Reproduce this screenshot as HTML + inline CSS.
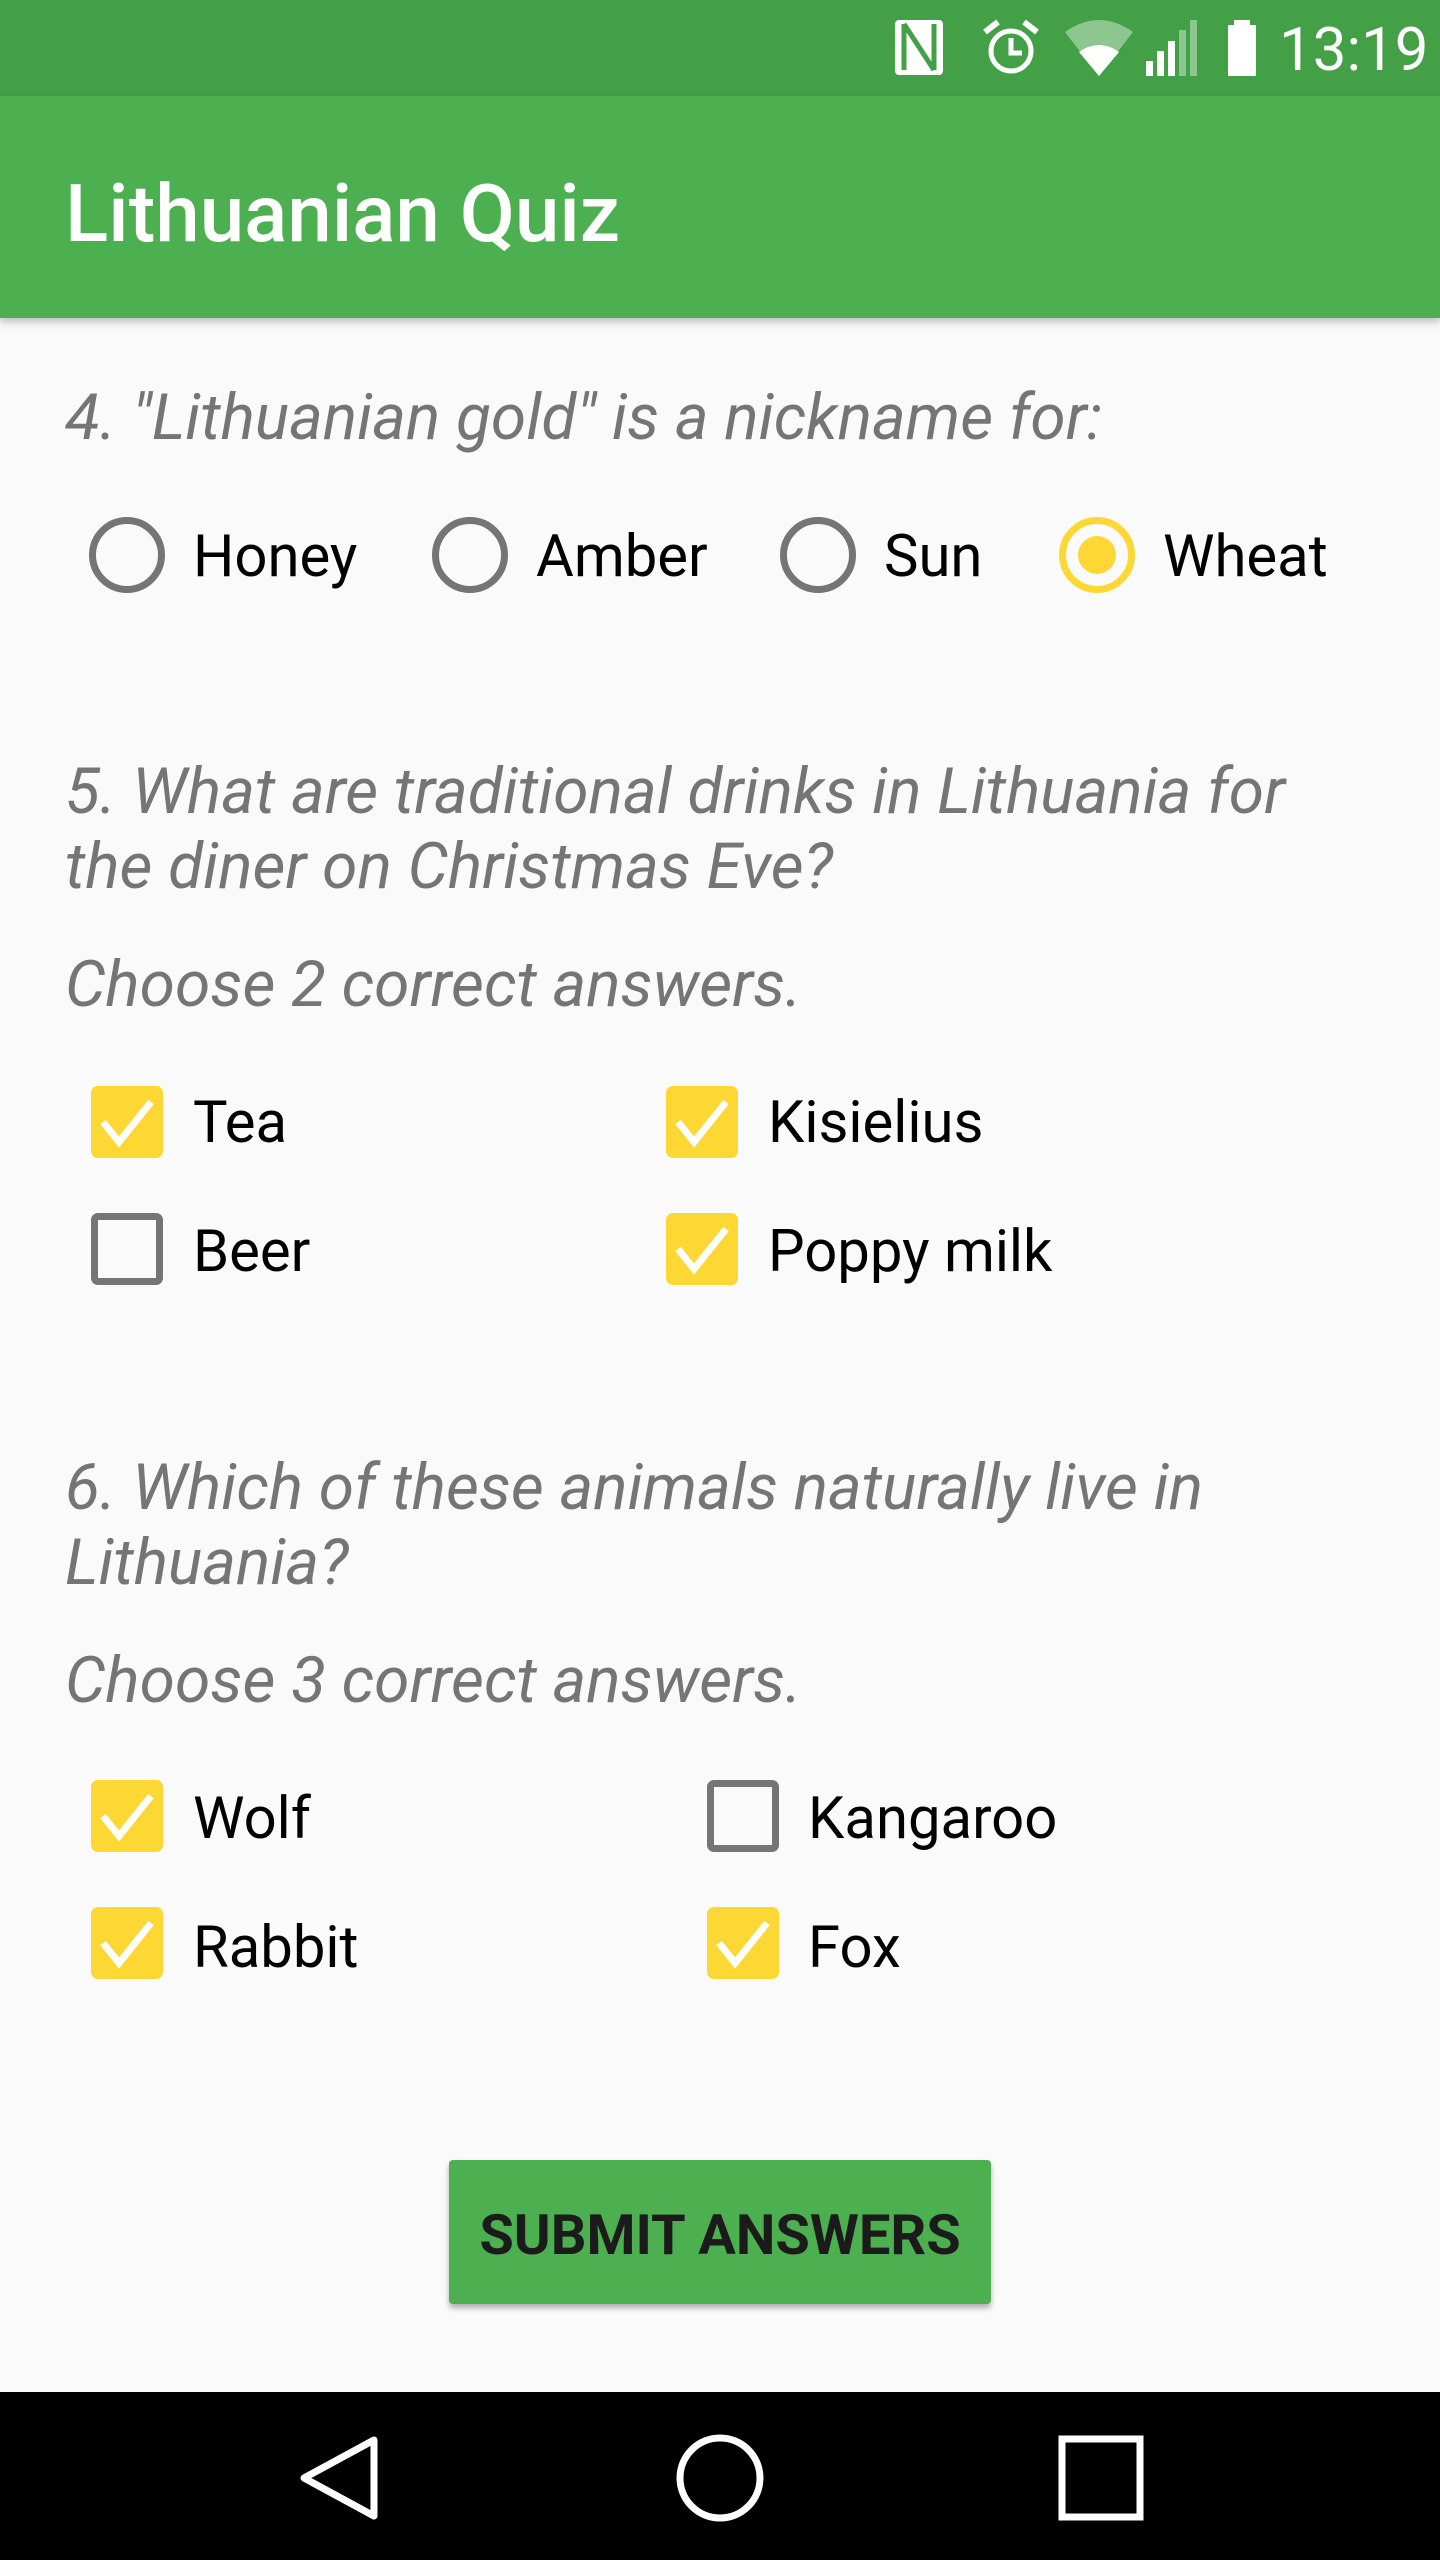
<!DOCTYPE html>
<html><head><meta charset="utf-8"><style>
*{margin:0;padding:0;box-sizing:border-box}
body{width:1440px;height:2560px;background:#fafafa;position:relative;overflow:hidden;font-family:"Roboto","Liberation Sans",sans-serif}
.a{position:absolute;white-space:nowrap}
.q{font-style:italic;color:#757575;font-size:64px;left:65px}
.t{font-size:58px;color:#000}
.rad{position:absolute;width:76px;height:76px;border-radius:50%;border:7px solid #757575}
.cb{position:absolute;width:72px;height:72px;border-radius:7px;background:#fdd835}
.cb.off{background:none;border:7px solid #757575}
</style></head><body>
<div class="a" style="left:0;top:0;width:1440px;height:96px;background:#43a047"></div>
<svg class="a" style="left:880px;top:0" width="420" height="96" viewBox="880 0 420 96">
<rect x="895" y="20" width="48" height="55" rx="4" fill="#fff"/>
<path d="M904 24 L904 70 M904 24 L934 70 M934 70 L934 24" stroke="#43a047" stroke-width="5" fill="none"/>
<circle cx="1011" cy="51" r="20" stroke="#fff" stroke-width="5" fill="none"/>
<path d="M1011 38 V53 H1022" stroke="#fff" stroke-width="5" fill="none"/>
<path d="M985 32 L998 22 M1037 32 L1024 22" stroke="#fff" stroke-width="6"/>
<path d="M1065 32 Q1099 8 1133 32 L1099 76 Z" fill="#fff" opacity=".4"/>
<path d="M1079 52 Q1099 38 1119 52 L1099 76 Z" fill="#fff"/>
<rect x="1146" y="61" width="7" height="15" fill="#fff"/><rect x="1157" y="51" width="7" height="25" fill="#fff"/><rect x="1168" y="41" width="7" height="35" fill="#fff"/>
<rect x="1179" y="30" width="7" height="46" fill="#fff" opacity=".4"/><rect x="1190" y="20" width="7" height="56" fill="#fff" opacity=".4"/>
<rect x="1234" y="20" width="16" height="8" fill="#fff"/><rect x="1228" y="25" width="28" height="51" fill="#fff"/>
</svg>
<div class="a" style="left:1279px;top:14px;font-size:60px;color:#fff;line-height:72px">13:19</div>
<div class="a" style="left:0;top:96px;width:1440px;height:222px;background:#4caf50;box-shadow:0 4px 8px rgba(0,0,0,.25)"></div>
<div class="a" style="left:65px;top:164px;font-size:80px;color:#fff;font-weight:500;line-height:100px">Lithuanian Quiz</div>

<div class="a q" style="top:373px;line-height:90px">4. "Lithuanian gold" is a nickname for:</div>
<div class="rad" style="left:89px;top:517px"></div>
<div class="rad" style="left:432px;top:517px"></div>
<div class="rad" style="left:780px;top:517px"></div>
<div class="rad" style="left:1059px;top:517px;border-color:#fdd835"><div style="position:absolute;left:12px;top:12px;width:38px;height:38px;border-radius:50%;background:#fdd835"></div></div>
<div class="a t" style="left:193px;top:512px;line-height:90px">Honey</div>
<div class="a t" style="left:536px;top:512px;line-height:90px">Amber</div>
<div class="a t" style="left:884px;top:512px;line-height:90px">Sun</div>
<div class="a t" style="left:1163px;top:512px;line-height:90px">Wheat</div>

<div class="a q" style="top:754px;line-height:75px">5. What are traditional drinks in Lithuania for<br>the diner on Christmas Eve?</div>
<div class="a q" style="top:947px;line-height:75px">Choose 2 correct answers.</div>

<div class="a q" style="top:1450px;line-height:75px">6. Which of these animals naturally live in<br>Lithuania?</div>
<div class="a q" style="top:1643px;line-height:75px">Choose 3 correct answers.</div>

<svg width="0" height="0" style="position:absolute"><defs><path id="ck" d="M12 36 L28 56 L60 16" stroke="#fff" stroke-width="7" fill="none"/></defs></svg>
<div class="cb" style="left:91px;top:1086px"><svg width="72" height="72"><use href="#ck"/></svg></div>
<div class="cb" style="left:666px;top:1086px"><svg width="72" height="72"><use href="#ck"/></svg></div>
<div class="cb off" style="left:91px;top:1213px"></div>
<div class="cb" style="left:666px;top:1213px"><svg width="72" height="72"><use href="#ck"/></svg></div>
<div class="a t" style="left:193px;top:1078px;line-height:90px">Tea</div>
<div class="a t" style="left:768px;top:1078px;line-height:90px">Kisielius</div>
<div class="a t" style="left:193px;top:1207px;line-height:90px">Beer</div>
<div class="a t" style="left:768px;top:1207px;line-height:90px">Poppy milk</div>

<div class="cb" style="left:91px;top:1780px"><svg width="72" height="72"><use href="#ck"/></svg></div>
<div class="cb off" style="left:707px;top:1780px"></div>
<div class="cb" style="left:91px;top:1907px"><svg width="72" height="72"><use href="#ck"/></svg></div>
<div class="cb" style="left:707px;top:1907px"><svg width="72" height="72"><use href="#ck"/></svg></div>
<div class="a t" style="left:193px;top:1774px;line-height:90px">Wolf</div>
<div class="a t" style="left:808px;top:1774px;line-height:90px">Kangaroo</div>
<div class="a t" style="left:193px;top:1903px;line-height:90px">Rabbit</div>
<div class="a t" style="left:808px;top:1903px;line-height:90px">Fox</div>

<div class="a" style="left:449px;top:2160px;width:542px;height:144px;background:#4caf50;border-radius:4px;box-shadow:0 4px 6px rgba(0,0,0,.3);text-align:center;line-height:150px;font-size:56px;font-weight:bold;color:#1b1b1b">SUBMIT ANSWERS</div>

<div class="a" style="left:0;top:2392px;width:1440px;height:168px;background:#000"></div>
<svg class="a" style="left:0;top:2392px" width="1440" height="168">
<path d="M374 48 L304 86 L374 124 Z" stroke="#fff" stroke-width="7" fill="none" stroke-linejoin="round"/>
<circle cx="720" cy="86" r="40" stroke="#fff" stroke-width="7" fill="none"/>
<rect x="1062" y="47" width="78" height="78" stroke="#fff" stroke-width="7" fill="none"/>
</svg>
</body></html>
